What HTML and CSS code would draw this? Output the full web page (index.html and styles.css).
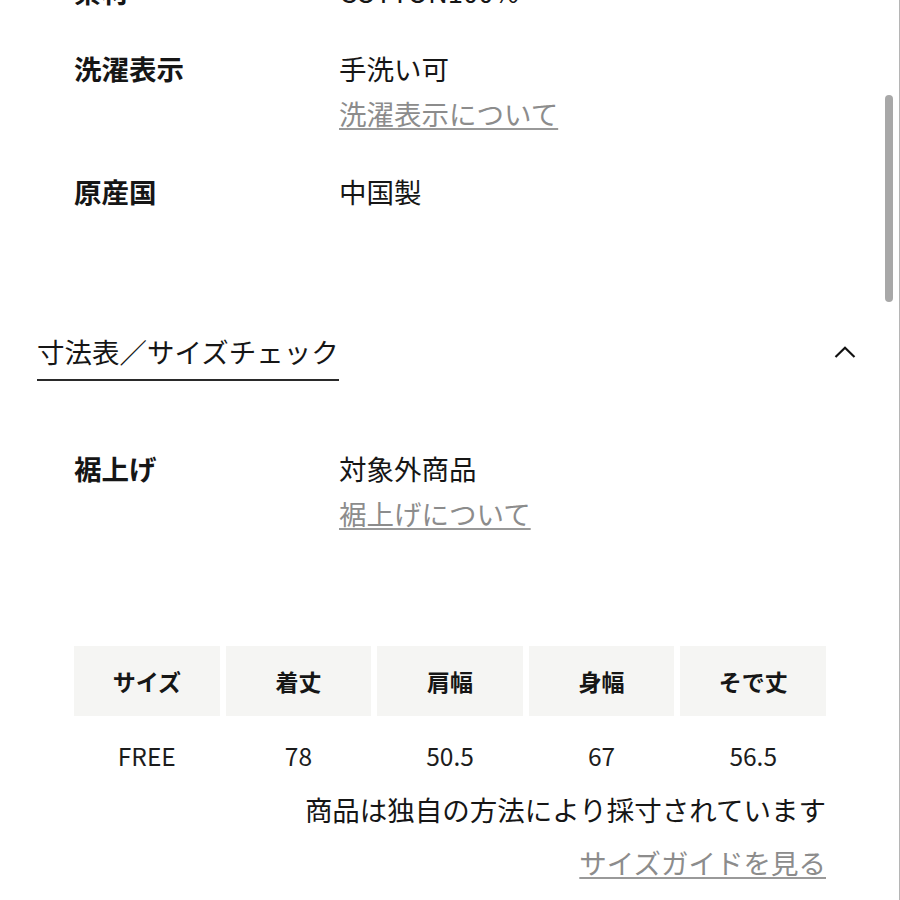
FILE: index.html
```html
<!DOCTYPE html>
<html lang="ja">
<head>
<meta charset="utf-8">
<link rel="stylesheet" href="styles.css">
</head>
<body>
<div class="page">
  <div class="specs">
    <div class="spec-row">
      <div class="label">素材</div>
      <div class="value"><div>COTTON100%</div></div>
    </div>
    <div class="spec-row">
      <div class="label">洗濯表示</div>
      <div class="value"><div>手洗い可</div><a class="link" href="#">洗濯表示について</a></div>
    </div>
    <div class="spec-row">
      <div class="label">原産国</div>
      <div class="value"><div>中国製</div></div>
    </div>
  </div>

  <div class="section-head">
    <span class="section-title">寸法表／サイズチェック</span>
    <svg class="chevron" width="22" height="12" viewBox="0 0 22 12"><path d="M1.5 11 L11 1.8 L20.5 11" fill="none" stroke="#111" stroke-width="2.2"/></svg>
  </div>

  <div class="specs specs-size">
    <div class="spec-row">
      <div class="label">裾上げ</div>
      <div class="value"><div>対象外商品</div><a class="link" href="#">裾上げについて</a></div>
    </div>
  </div>

  <div class="size-table">
    <div class="th">サイズ</div>
    <div class="th">着丈</div>
    <div class="th">肩幅</div>
    <div class="th">身幅</div>
    <div class="th">そで丈</div>
    <div class="td">FREE</div>
    <div class="td">78</div>
    <div class="td">50.5</div>
    <div class="td">67</div>
    <div class="td">56.5</div>
  </div>
  <div class="note">商品は独自の方法により採寸されています</div>
  <div class="guide"><a class="link" href="#">サイズガイドを見る</a></div>
</div>
<div class="scroll-track"></div>
<div class="scroll-thumb"></div>
</body>
</html>
```

FILE: styles.css
```css
html, body {
  margin: 0;
  padding: 0;
  background: #fff;
  overflow: hidden;
}
body {
  font-family: "Noto Sans CJK JP", "Noto Sans", sans-serif;
  color: #161616;
  width: 900px;
  height: 900px;
}
.page {
  margin-top: -31px;
  padding-left: 37px;
  width: 820px;
}
.specs {
  padding-left: 37px;
  display: flex;
  flex-direction: column;
  gap: 33px;
}
.spec-row {
  display: grid;
  grid-template-columns: 265px 1fr;
  font-size: 27.5px;
  line-height: 44px;
}
.label {
  font-weight: 700;
}
.value {
  display: flex;
  flex-direction: column;
  align-items: flex-start;
}
.link {
  color: #8c8c8c;
  line-height: 46px;
  text-decoration: underline;
  text-decoration-color: #999;
  text-decoration-thickness: 2px;
  text-underline-offset: 3px;
}
.section-head {
  margin-top: 116px;
  display: flex;
  justify-content: space-between;
  align-items: flex-start;
}
.section-title {
  font-size: 27.5px;
  line-height: 44px;
  padding-bottom: 6px;
  border-bottom: 2px solid #2a2a2a;
}
.chevron {
  margin-top: 17px;
  margin-right: 1px;
}
.specs-size {
  margin-top: 65px;
}
.size-table {
  margin-top: 110px;
  margin-left: 37px;
  width: 752px;
  display: grid;
  grid-template-columns: repeat(5, 1fr);
  column-gap: 6px;
}
.th {
  background: #f5f5f3;
  height: 70px;
  display: flex;
  align-items: center;
  justify-content: center;
  font-size: 23px;
  font-weight: 700;
}
.td {
  padding-top: 18px;
  line-height: 44px;
  text-align: center;
  font-size: 24.5px;
  color: #1c1c1c;
}
.note {
  margin-top: 9px;
  margin-left: 37px;
  width: 752px;
  text-align: right;
  font-size: 27.5px;
  line-height: 44px;
}
.guide {
  margin-top: 8px;
  margin-left: 37px;
  width: 752px;
  text-align: right;
  font-size: 27.5px;
  line-height: 46px;
}
.scroll-track {
  position: fixed;
  top: 0;
  right: 0;
  width: 1px;
  height: 900px;
  background: #b5b5b5;
}
.scroll-thumb {
  position: fixed;
  top: 95px;
  left: 885px;
  width: 8px;
  height: 207px;
  border-radius: 4px;
  background: #a8a8a8;
}
```
